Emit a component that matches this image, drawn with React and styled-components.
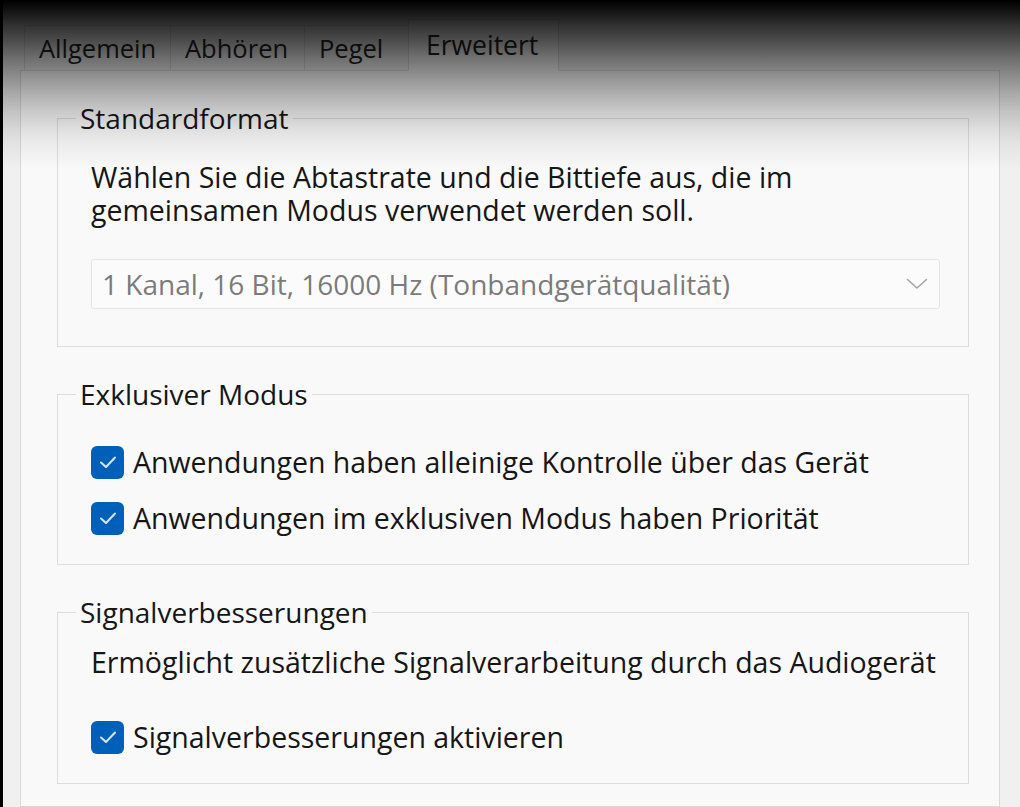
import React from "react";
import styled, { createGlobalStyle } from "styled-components";

const Global = createGlobalStyle`
  html, body {
    margin: 0;
    padding: 0;
    background: #f0f0f0;
  }
  body {
    font-family: "Open Sans", "Noto Sans", "Liberation Sans", sans-serif;
    color: #161616;
    overflow: hidden;
  }
`;

const Screen = styled.div`
  position: relative;
  display: flex;
  width: 1020px;
  height: 807px;
  overflow: hidden;
  background: #f0f0f0;
`;

const Bezel = styled.div`
  flex: none;
  width: 3px;
  background: #000;
`;

const Window = styled.div`
  flex: 1;
  display: flex;
  flex-direction: column;
  padding: 19px 0 0 17px;
  min-width: 0;
`;

const TabStrip = styled.div`
  position: relative;
  z-index: 1;
  display: flex;
  align-items: flex-end;
  height: 52px;
  padding-left: 4px;
  margin-bottom: -1px;
`;

const Tab = styled.div`
  box-sizing: border-box;
  display: flex;
  align-items: center;
  width: ${(p) => p.$w}px;
  height: ${(p) => (p.$active ? 52 : 46)}px;
  padding-left: ${(p) => (p.$active ? 17 : 14)}px;
  margin-right: -1px;
  border: 1px solid #d9d9d9;
  border-bottom-color: ${(p) => (p.$active ? "#f9f9f9" : "#d9d9d9")};
  background: ${(p) => (p.$active ? "#f9f9f9" : "#f0f0f0")};
  font-size: ${(p) => (p.$active ? 26.5 : 25.5)}px;
  color: #222;
  white-space: nowrap;
`;

const Panel = styled.div`
  box-sizing: border-box;
  flex: 1;
  width: 980px;
  display: flex;
  flex-direction: column;
  gap: 31px;
  padding: 31px 30px 0 36px;
  background: #f9f9f9;
  border: 1px solid #d9d9d9;
`;

const Group = styled.fieldset`
  margin: 0;
  padding: 0;
  min-width: 0;
  border: 1px solid #dcdcdc;
`;

const Legend = styled.legend`
  margin-left: 18px;
  padding: 0 4px;
  font-size: 28px;
  line-height: 33px;
  color: #161616;
`;

const GroupBody = styled.div`
  display: flex;
  flex-direction: column;
  padding: ${(p) => p.$top}px 28px ${(p) => p.$bottom}px 33px;
  gap: ${(p) => p.$gap || 0}px;
`;

const Text = styled.div`
  font-size: 28.5px;
  line-height: 33px;
  color: #161616;
  margin-top: ${(p) => p.$mt || 0}px;
`;

const Combo = styled.div`
  box-sizing: border-box;
  display: flex;
  align-items: center;
  justify-content: space-between;
  height: 50px;
  margin-top: ${(p) => p.$mt || 0}px;
  padding: 0 11px 0 10px;
  background: #fbfbfb;
  border: 1px solid #e4e4e4;
  border-radius: 3px;
  font-size: 28px;
  color: #7b7b7b;
`;

const CheckRow = styled.label`
  display: flex;
  align-items: center;
  gap: 9px;
  height: 34px;
  margin-top: ${(p) => p.$mt || 0}px;
  font-size: 28.5px;
  line-height: 33px;
  color: #161616;
`;

const Box = styled.span`
  flex: none;
  display: flex;
  align-items: center;
  justify-content: center;
  width: 33px;
  height: 33px;
  border-radius: 6px;
  background: #005fb8;
`;

const Shade = styled.div`
  position: absolute;
  z-index: 5;
  left: 0;
  top: 0;
  right: 0;
  height: 170px;
  pointer-events: none;
  background: linear-gradient(
    to bottom,
    rgba(0, 0, 0, 1) 0px,
    rgba(0, 0, 0, 0.94) 8px,
    rgba(0, 0, 0, 0.8) 25px,
    rgba(0, 0, 0, 0.69) 40px,
    rgba(0, 0, 0, 0.53) 60px,
    rgba(0, 0, 0, 0.32) 90px,
    rgba(0, 0, 0, 0.2) 110px,
    rgba(0, 0, 0, 0.1) 130px,
    rgba(0, 0, 0, 0.06) 142px,
    rgba(0, 0, 0, 0) 170px
  );
`;

const Check = () => (
  <Box>
    <svg width="20" height="16" viewBox="0 0 20 16" fill="none">
      <polyline
        points="3,8.5 8,13 17,3.5"
        stroke="#d6e6f8"
        strokeWidth="2"
        strokeLinecap="round"
        strokeLinejoin="round"
      />
    </svg>
  </Box>
);

const Chevron = () => (
  <svg width="22" height="12" viewBox="0 0 22 12" fill="none">
    <polyline
      points="1.5,1.5 11,10 20.5,1.5"
      stroke="#a3a3a3"
      strokeWidth="1.5"
      strokeLinecap="round"
      strokeLinejoin="round"
    />
  </svg>
);

const tabs = [
  { label: "Allgemein", w: 147 },
  { label: "Abhören", w: 135 },
  { label: "Pegel", w: 105 },
  { label: "Erweitert", w: 151, active: true },
];

export default function App() {
  return (
    <>
      <Global />
      <Screen>
        <Bezel />
        <Window>
          <TabStrip>
            {tabs.map((t) => (
              <Tab key={t.label} $w={t.w} $active={t.active}>
                {t.label}
              </Tab>
            ))}
          </TabStrip>
          <Panel>
            <Group>
              <Legend>Standardformat</Legend>
              <GroupBody $top={26} $bottom={37}>
                <Text>
                  Wählen Sie die Abtastrate und die Bittiefe aus, die im
                  <br />
                  gemeinsamen Modus verwendet werden soll.
                </Text>
                <Combo $mt={32}>
                  <span>1 Kanal, 16 Bit, 16000 Hz (Tonbandgerätqualität)</span>
                  <Chevron />
                </Combo>
              </GroupBody>
            </Group>

            <Group>
              <Legend>Exklusiver Modus</Legend>
              <GroupBody $top={34} $bottom={29} $gap={22}>
                <CheckRow>
                  <Check />
                  Anwendungen haben alleinige Kontrolle über das Gerät
                </CheckRow>
                <CheckRow>
                  <Check />
                  Anwendungen im exklusiven Modus haben Priorität
                </CheckRow>
              </GroupBody>
            </Group>

            <Group>
              <Legend>Signalverbesserungen</Legend>
              <GroupBody $top={17} $bottom={29}>
                <Text>
                  Ermöglicht zusätzliche Signalverarbeitung durch das Audiogerät
                </Text>
                <CheckRow $mt={41}>
                  <Check />
                  Signalverbesserungen aktivieren
                </CheckRow>
              </GroupBody>
            </Group>
          </Panel>
        </Window>
        <Shade />
      </Screen>
    </>
  );
}
